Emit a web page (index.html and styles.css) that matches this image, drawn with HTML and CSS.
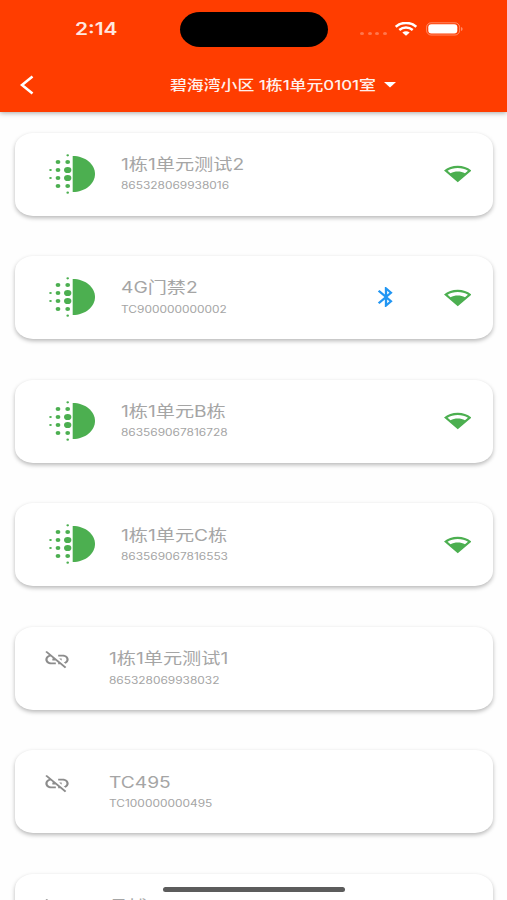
FILE: index.html
```html
<!DOCTYPE html>
<html lang="zh-CN">
<head>
<meta charset="utf-8">
<title>门禁设备</title>
<link rel="stylesheet" href="styles.css">
</head>
<body>
<svg class="defs" aria-hidden="true">
<symbol id="deblur" viewBox="0 0 58 48" preserveAspectRatio="none">
<path d="M29.7 6C42 6 52 14 52 24S42 42 29.7 42z"/>
<ellipse cx="24.7" cy="5.3" rx="1.3" ry="1.1"/><ellipse cx="24.7" cy="42.7" rx="1.3" ry="1.1"/>
<ellipse cx="7.5" cy="20" rx="1.3" ry="1.1"/><ellipse cx="7.5" cy="28" rx="1.3" ry="1.1"/>
<ellipse cx="15" cy="12" rx="2.4" ry="2"/><ellipse cx="15" cy="20" rx="2.4" ry="2"/><ellipse cx="15" cy="28" rx="2.4" ry="2"/><ellipse cx="15" cy="36" rx="2.4" ry="2"/>
<ellipse cx="24.7" cy="12" rx="2.4" ry="2"/><ellipse cx="24.7" cy="20" rx="3.7" ry="3.1"/><ellipse cx="24.7" cy="28" rx="3.7" ry="3.1"/><ellipse cx="24.7" cy="36" rx="2.4" ry="2"/>
</symbol>
<symbol id="signal" viewBox="0 0 24 24" preserveAspectRatio="none">
<path fill-rule="evenodd" d="M24 8.98C20.93 5.9 16.69 4 12 4S3.07 5.9 0 8.98L12 21zM3.1 9.200C5.600 7.300 8.670 6.300 12 6.300s6.400 1 8.900 2.900l-2.600 2.600C16.500 10.700 14.300 10 12 10s-4.500.7-6.300 1.800z"/>
</symbol>
<symbol id="bluetooth" viewBox="0 0 24 24" preserveAspectRatio="none">
<path d="M17.71 7.71L12 2h-1v7.59L6.41 5 5 6.41 10.59 12 5 17.59 6.41 19 11 14.41V22h1l5.71-5.71-4.3-4.29 4.3-4.29zM13 5.83l1.88 1.88L13 9.59V5.83zm1.88 10.46L13 18.17v-3.76l1.88 1.88z"/>
</symbol>
<symbol id="unlink" viewBox="0 0 24 24" preserveAspectRatio="none">
<path d="M17 7h-4v1.9h4c1.71 0 3.1 1.39 3.1 3.1 0 1.43-.98 2.63-2.31 2.98l1.46 1.46C20.88 15.61 22 13.95 22 12c0-2.76-2.24-5-5-5zm-1 4h-2.19l2 2H16zM2 4.27l3.11 3.11C3.29 8.12 2 9.91 2 12c0 2.76 2.24 5 5 5h4v-1.9H7c-1.71 0-3.1-1.39-3.1-3.1 0-1.59 1.21-2.9 2.76-3.07L8.73 11H8v2h2.73L13 15.27V17h1.73l4.01 4L20 19.74 3.27 3z"/>
</symbol>
</svg>
<header class="header">
<div class="status">
<span class="time">2:14</span>
<span class="island"></span>
<span class="cell"><i></i><i></i><i></i><i></i></span>
<svg class="wifi" viewBox="0 0 22 14"><path d="M.7 4.700C6.400-.3 15.600-.3 21.300 4.700"/><path d="M4.300 8C8.200 4.800 13.800 4.800 17.700 8"/><path class="tip" d="M7.300 10.600C9.600 8.800 12.400 8.800 14.700 10.600L11 13.700z"/></svg>
<svg class="battery" viewBox="0 0 38 14"><rect class="shell" x=".6" y=".8" width="33" height="12.200" rx="4.500"/><rect class="charge" x="2.300" y="2.300" width="29" height="9.200" rx="3"/><path class="shell-tip" d="M35.200 5c1.800.8 1.800 3.200 0 4z"/></svg>
</div>
<div class="nav">
<svg class="back" viewBox="0 0 14 20"><path d="M12.500 1.500L2 10l10.500 8.500"/></svg>
<div class="room"><span class="room-name">碧海湾小区 1栋1单元0101室</span></div>
<svg class="caret" viewBox="0 0 12 6"><path d="M0 0h12L6 5.500z"/></svg>
</div>
</header>
<main class="list">
<section class="card">
<svg class="device"><use href="#deblur"/></svg>
<div class="info"><p class="name">1栋1单元测试2</p><p class="serial">865328069938016</p></div>
<svg class="signal"><use href="#signal"/></svg>
</section>
<section class="card">
<svg class="device"><use href="#deblur"/></svg>
<div class="info"><p class="name">4G门禁2</p><p class="serial">TC900000000002</p></div>
<svg class="bluetooth"><use href="#bluetooth"/></svg>
<svg class="signal"><use href="#signal"/></svg>
</section>
<section class="card">
<svg class="device"><use href="#deblur"/></svg>
<div class="info"><p class="name">1栋1单元B栋</p><p class="serial">863569067816728</p></div>
<svg class="signal"><use href="#signal"/></svg>
</section>
<section class="card">
<svg class="device"><use href="#deblur"/></svg>
<div class="info"><p class="name">1栋1单元C栋</p><p class="serial">863569067816553</p></div>
<svg class="signal"><use href="#signal"/></svg>
</section>
<section class="card offline">
<svg class="unlink"><use href="#unlink"/></svg>
<div class="info"><p class="name">1栋1单元测试1</p><p class="serial">865328069938032</p></div>
</section>
<section class="card offline">
<svg class="unlink"><use href="#unlink"/></svg>
<div class="info"><p class="name">TC495</p><p class="serial">TC100000000495</p></div>
</section>
<section class="card offline last">
<svg class="unlink"><use href="#unlink"/></svg>
<div class="info"><p class="name">昌博2</p></div>
</section>
</main>
<div class="home"></div>
</body>
</html>
```
FILE: styles.css
```css
* { box-sizing: border-box; }
body { margin: 0; height: 900px; overflow: hidden; background: #fefefe; font-family: Inter, "Noto Sans CJK SC", sans-serif; }
.defs { position: absolute; width: 0; height: 0; }
svg { display: block; flex: none; }
p { margin: 0; }
.header { height: 112px; background: #ff3d00; color: #fff; box-shadow: 0 1px 5px rgba(0,0,0,.35); }
.status { height: 58px; display: flex; align-items: center; padding-left: 75px; }
.time { width: 105px; font-size: 17px; font-weight: 600; transform: scaleX(1.23); transform-origin: left; opacity: .88; }
.island { width: 148px; height: 35px; border-radius: 20px / 17.5px; background: #000; }
.cell { display: flex; gap: 3.7px; margin: 9px 0 0 32px; }
.cell i { width: 4px; height: 3px; border-radius: 50%; background: #fff; opacity: .3; }
.wifi { width: 22px; height: 14px; margin-left: 8px; fill: none; stroke: #fff; stroke-width: 2.5; }
.wifi .tip { fill: #fff; stroke: none; }
.battery { width: 38px; height: 14px; margin-left: 9px; }
.shell { fill: none; stroke: #fff; opacity: .4; }
.shell-tip { fill: #fff; opacity: .5; }
.charge { fill: #fff; }
.nav { height: 54px; display: flex; align-items: center; padding-left: 20px; }
.back { width: 14px; height: 20px; fill: none; stroke: #fff; stroke-width: 2.6; }
.room { width: 215px; margin: 0 0 2px 136px; }
.room-name { display: inline-block; white-space: nowrap; font-size: 13.6px; font-weight: 500; transform: scaleX(1.24); transform-origin: left; opacity: .92; }
.caret { width: 12px; height: 6px; margin-left: -1px; fill: #fff; }
.list { display: grid; grid-auto-rows: 83px; gap: 40.6px; height: 788px; overflow: hidden; padding: 20.5px 14px 0 15px; }
.card { display: flex; align-items: center; padding: 0 22px 0 28px; border-radius: 18px / 15px; background: #fff; box-shadow: 0 2px 4px rgba(0,0,0,.28); }
.device { width: 58px; height: 48px; margin-bottom: 1px; fill: #4caf50; }
.info { flex: 1; margin: 0 0 1px 20px; color: #a5a5a5; }
.name, .serial { width: max-content; white-space: nowrap; transform-origin: left; }
.name { font-size: 15.4px; line-height: 22px; transform: scaleX(1.245); }
.serial { font-size: 9.8px; line-height: 14px; margin-top: 3.5px; transform: scaleX(1.215); }
.signal { width: 27.5px; height: 23px; margin-bottom: 1px; fill: #4caf50; }
.bluetooth { width: 28px; height: 24px; margin: 0 44px 1px 0; fill: #2196f3; }
.unlink { width: 28px; height: 23px; margin-bottom: 17px; fill: #8c8c8c; }
.offline .info { margin-left: 38px; }
.last { height: 60px; align-items: flex-start; padding-top: 22px; }
.last .unlink { margin-top: 0; }
.home { position: absolute; left: 163px; top: 887px; width: 182px; height: 5px; border-radius: 3px; background: #5c5c5c; }
```
